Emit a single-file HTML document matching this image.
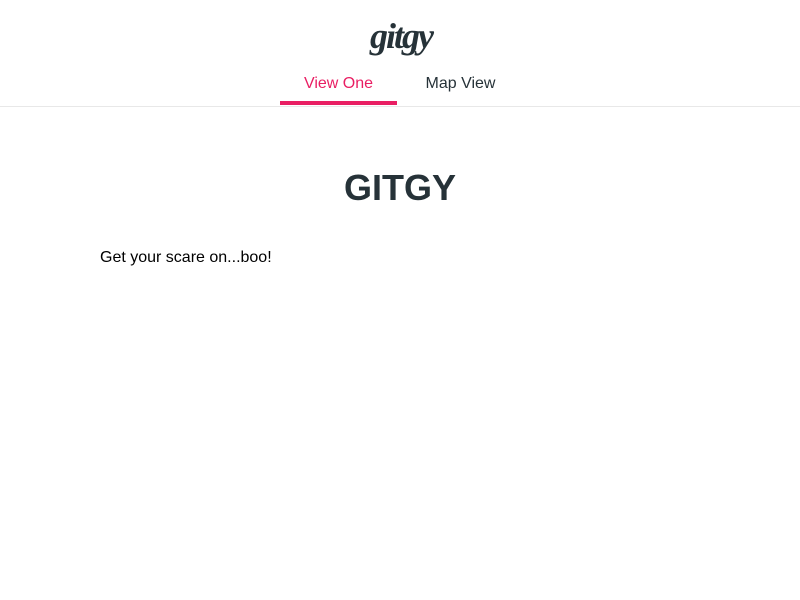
<!DOCTYPE html>
<html><head><style>
body{margin:0;background:#fff;font-family:"Liberation Sans",sans-serif;}
.hdr{height:106px;border-bottom:1px solid #e8e8e8;position:relative;}
.logo{position:absolute;left:370px;top:16px;width:62px;font-family:"Liberation Serif",serif;font-style:italic;font-weight:bold;font-size:36px;color:#263238;letter-spacing:-2px;line-height:40px;}
.tab{position:absolute;top:75px;font-size:16px;}
.t1{left:280px;width:117px;text-align:center;color:#e91e63;}
.t2{left:397px;width:127px;text-align:center;color:#263238;}
.bar{position:absolute;left:280px;top:101px;width:117px;height:4px;background:#e91e63;}
h1{position:absolute;top:166px;left:0;width:800px;text-align:center;margin:0;font-size:36px;color:#263238;line-height:44px;}
p{position:absolute;top:249px;left:100px;margin:0;font-size:16px;color:#000;}
</style></head><body>
<div class="hdr">
<div class="logo">gitgy</div>
<div class="tab t1">View One</div>
<div class="tab t2">Map View</div>
<div class="bar"></div>
</div>
<h1>GITGY</h1>
<p>Get your scare on...boo!</p>
</body></html>
